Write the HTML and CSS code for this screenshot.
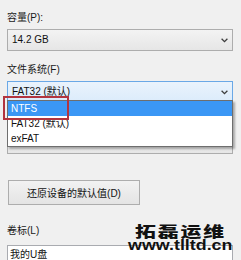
FILE: index.html
```html
<!DOCTYPE html>
<html lang="zh-CN">
<head>
<meta charset="utf-8">
<link rel="stylesheet" href="styles.css">
</head>
<body>
<div class="panel">
  <div class="label">容量(P):</div>
  <div class="combo">
    <span class="combo-text">14.2 GB</span>
    <svg class="chev" width="7" height="5" viewBox="0 0 7 5"><path d="M0.6 0.8 L3.5 3.6 L6.4 0.8" fill="none" stroke="#3c3c3c" stroke-width="1.3"/></svg>
  </div>
  <div class="label gap">文件系统(F)</div>
  <div class="combo-wrap">
    <div class="combo focus">
      <span class="combo-text">FAT32 (默认)</span>
      <svg class="chev" width="7" height="5" viewBox="0 0 7 5"><path d="M0.6 0.8 L3.5 3.6 L6.4 0.8" fill="none" stroke="#3c3c3c" stroke-width="1.3"/></svg>
    </div>
    <ul class="list">
      <li class="row sel">NTFS</li>
      <li class="row">FAT32 (默认)</li>
      <li class="row">exFAT</li>
    </ul>
  </div>
  <div class="label gap"></div>
  <div class="combo c3"></div>
  <div class="button">还原设备的默认值(D)</div>
  <div class="label lbl4">卷标(L)</div>
  <div class="field">我的U盘</div>

  <div class="marker"></div>
  <div class="wm">
    <div class="wm-cn">拓磊运维</div>
    <div class="wm-en">www.tlltd.cn</div>
  </div>
</div>
</body>
</html>
```

FILE: styles.css
```css
html, body {
  margin: 0;
  padding: 0;
}
body {
  width: 241px;
  height: 260px;
  overflow: hidden;
  background: #f0f0f0;
  font-family: "Liberation Sans", "Noto Sans CJK SC", sans-serif;
  font-size: 10px;
  color: #111;
}
.panel {
  position: relative;
  padding: 11px 8px 0 7px;
  display: flex;
  flex-direction: column;
}
.label {
  height: 14px;
  line-height: 14px;
  color: #1a1a1a;
}
.label.gap {
  margin-top: 12px;
}
.combo {
  margin-top: 4px;
  height: 22px;
  box-sizing: border-box;
  border: 1px solid #adadad;
  background: linear-gradient(#f3f3f3, #e6e6e6);
  display: flex;
  align-items: center;
  justify-content: space-between;
  padding: 0 4px 0 4px;
}
.combo.focus {
  margin-top: 0;
  border-color: #6aa8e6;
  background: linear-gradient(#eaf3fc, #dbebfb);
}
.combo.c3 {
  margin-top: 3px;
}
.combo-text {
  line-height: 20px;
}
.chev {
  display: block;
}
.combo-wrap {
  position: relative;
  margin-top: 4px;
}
.list {
  position: absolute;
  top: 19px;
  left: 0;
  right: 0;
  margin: 0;
  padding: 0;
  list-style: none;
  background: #fff;
  border: 1px solid #6e6e6e;
  box-shadow: 2px 2px 2px rgba(0, 0, 0, 0.3);
  z-index: 2;
}
.row {
  height: 15px;
  line-height: 15px;
  padding-left: 3px;
  color: #111;
}
.row.sel {
  background: #3b97f5;
  color: #fff;
}
.button {
  margin-top: 26px;
  margin-left: 1px;
  width: 132px;
  height: 25px;
  box-sizing: border-box;
  border: 1px solid #adadad;
  background: linear-gradient(#f2f2f2, #e4e4e4);
  display: flex;
  align-items: center;
  justify-content: center;
  color: #111;
}
.label.lbl4 {
  margin-top: 19px;
}
.field {
  margin-top: 7px;
  height: 22px;
  box-sizing: border-box;
  border: 1px solid #a9abb0;
  background: #fff;
  line-height: 18px;
  padding-left: 2px;
}
.marker {
  position: absolute;
  left: 3px;
  top: 96px;
  width: 66px;
  height: 24px;
  box-sizing: border-box;
  border: 2px solid #b2343f;
  z-index: 3;
}
.wm {
  position: absolute;
  left: 128px;
  top: 223px;
  z-index: 4;
}
.wm-cn {
  margin-left: 7px;
  font-family: "Noto Sans CJK SC", sans-serif;
  font-weight: 900;
  font-size: 14.5px;
  line-height: 15px;
  letter-spacing: 1.3px;
  color: #111;
  transform: scale(1.44, 1);
  transform-origin: left top;
  white-space: nowrap;
}
.wm-en {
  font-family: "Liberation Sans", sans-serif;
  font-weight: bold;
  font-size: 15px;
  line-height: 14px;
  color: #111;
  transform: scale(1.19, 1);
  transform-origin: left top;
  white-space: nowrap;
}
```
